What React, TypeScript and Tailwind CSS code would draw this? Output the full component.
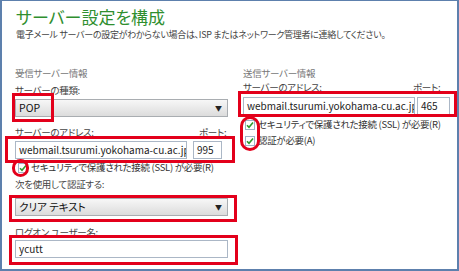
import React from "react";

const jp = "font-['Noto_Sans_CJK_JP','Noto_Sans',sans-serif] [font-feature-settings:'palt']";

function Dropdown({ value }: { value: string }) {
  return (
    <div className="flex h-[18px] items-center justify-between border border-[#a9adb1] bg-gradient-to-b from-[#f7f7f7] to-[#dcdcdc] pl-[3px] pr-[5px]">
      <span className="text-[10.5px] leading-none text-[#111]">{value}</span>
      <span className="text-[7px] leading-none text-[#222]">▼</span>
    </div>
  );
}

function TextBox({ value, className = "" }: { value: string; className?: string }) {
  return (
    <div className={`flex h-[18px] items-center overflow-hidden whitespace-nowrap border border-[#abb7c6] bg-white pl-[3px] ${className}`}>
      <span className="text-[10px] leading-none text-[#222]">{value}</span>
    </div>
  );
}

function Check({ label }: { label: string }) {
  return (
    <div className="flex h-[10px] items-center gap-[3px] whitespace-nowrap">
      <span className="flex h-[10px] w-[10px] shrink-0 items-center justify-center border border-[#9fb2c8] bg-white">
        <svg width="8" height="8" viewBox="0 0 8 8">
          <path d="M1 4.2 L3 6.3 L7 1.5" fill="none" stroke="#2e9a2e" strokeWidth="1.6" />
        </svg>
      </span>
      <span className="text-[9.5px] leading-none tracking-[-0.3px] text-[#333]">{label}</span>
    </div>
  );
}

function Label({ text, port, portWidth = "w-[29px]" }: { text: string; port?: boolean; portWidth?: string }) {
  return (
    <div className="flex h-[12px] items-center justify-between whitespace-nowrap text-[9.5px] leading-[12px] tracking-[-0.3px] text-[#444]">
      <span>{text}</span>
      {port && <span className={portWidth}>ポート:</span>}
    </div>
  );
}

export default function App() {
  return (
    <div className={`relative h-[271px] w-[459px] overflow-hidden border-x-2 border-b-2 border-t border-[#5d80ad] bg-white ${jp}`}>
      <div className="h-[66px] pl-[14px] pt-[5px]">
        <h1 className="text-[17px] leading-[22px] text-[#2f8f2f]">サーバー設定を構成</h1>
        <p className="mt-[1px] whitespace-nowrap text-[9px] leading-[12px] tracking-[-0.3px] text-[#444]">
          電子メール サーバーの設定がわからない場合は、ISP またはネットワーク管理者に連絡してください。
        </p>
      </div>

      <div className="flex gap-[15px] pl-[13px]">
        {/* 受信 */}
        <div className="flex w-[213px] flex-col">
          <div className="h-[12px] text-[9.5px] leading-[12px] tracking-[-0.3px] text-[#777]">受信サーバー情報</div>
          <div className="mt-[5px]">
            <Label text="サーバーの種類:" />
          </div>
          <div className="mt-[3px]">
            <Dropdown value="POP" />
          </div>
          <div className="mt-[9px]">
            <Label text="サーバーのアドレス:" port />
          </div>
          <div className="mt-[3px] flex gap-[6px] pr-[6px]">
            <TextBox value="webmail.tsurumi.yokohama-cu.ac.jp" className="flex-1" />
            <TextBox value="995" className="w-[29px]" />
          </div>
          <div className="mt-[4px] pl-[3px]">
            <Check label="セキュリティで保護された接続 (SSL) が必要(R)" />
          </div>
          <div className="mt-[5px]">
            <Label text="次を使用して認証する:" />
          </div>
          <div className="mt-[8px]">
            <Dropdown value="クリア テキスト" />
          </div>
          <div className="mt-[10px]">
            <Label text="ログオン ユーザー名:" />
          </div>
          <div className="mt-[2px]">
            <TextBox value="ycutt" />
          </div>
        </div>

        {/* 送信 */}
        <div className="flex w-[208px] flex-col">
          <div className="h-[12px] text-[9.5px] leading-[12px] tracking-[-0.3px] text-[#777]">送信サーバー情報</div>
          <div className="mt-[2px]">
            <Label text="サーバーのアドレス:" port portWidth="w-[38px]" />
          </div>
          <div className="mt-[4px] flex gap-[2px] pr-[1px]">
            <TextBox value="webmail.tsurumi.yokohama-cu.ac.jp" className="h-[17px] flex-1" />
            <TextBox value="465" className="h-[17px] w-[33px]" />
          </div>
          <div className="mt-[5px] flex flex-col gap-[6px] pl-[2px]">
            <Check label="セキュリティで保護された接続 (SSL) が必要(R)" />
            <Check label="認証が必要(A)" />
          </div>
        </div>
      </div>

      {/* red annotations */}
      <div className="pointer-events-none absolute left-[10px] top-[92px] h-[29px] w-[42px] border-[3px] border-[#e3001b]" />
      <div className="pointer-events-none absolute left-[3px] top-[135px] h-[27px] w-[230px] border-[3px] border-[#e3001b]" />
      <div className="pointer-events-none absolute left-[10px] top-[158px] h-[18px] w-[17px] rounded-full border-[3px] border-[#e3001b]" />
      <div className="pointer-events-none absolute left-[7px] top-[194px] h-[27px] w-[228px] border-[3px] border-[#e3001b]" />
      <div className="pointer-events-none absolute left-[7px] top-[234px] h-[30px] w-[229px] border-[3px] border-[#e3001b]" />
      <div className="pointer-events-none absolute left-[236px] top-[90px] h-[26px] w-[219px] border-[3px] border-[#e3001b]" />
      <div className="pointer-events-none absolute left-[238px] top-[115px] h-[35px] w-[20px] rounded-full border-[3px] border-[#e3001b]" />
    </div>
  );
}
